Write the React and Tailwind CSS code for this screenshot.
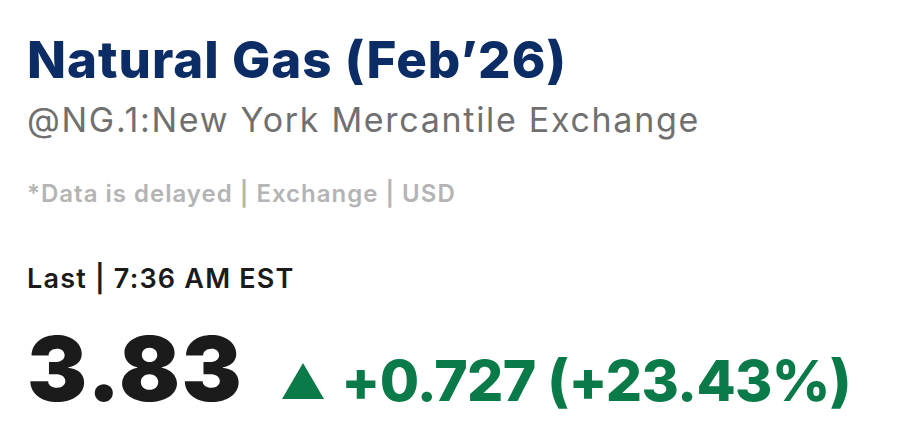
export default function App() {
  return (
    <div className="w-[904px] h-[426px] bg-white overflow-hidden pl-[27px] pt-[30px] font-['Inter','Liberation_Sans',sans-serif]">
      {/* Header */}
      <h1 className="text-[51px] leading-[60px] font-extrabold tracking-[1px] text-[#0b2c65]">
        Natural Gas (Feb’26)
      </h1>
      <div className="text-[34px] leading-[44px] text-[#707070] tracking-[1.7px] mt-[8px]">
        @NG.1:New York Mercantile Exchange
      </div>
      <div className="text-[24px] leading-[30px] font-semibold text-[#b4b4b4] tracking-[1px] mt-[37px]">
        *Data is delayed | Exchange | USD
      </div>

      {/* Quote */}
      <div className="text-[27px] leading-[32px] font-semibold text-[#1b1b1b] tracking-[1.2px] mt-[54px]">
        Last | 7:36 AM EST
      </div>
      <div className="flex items-baseline mt-[29px]">
        <span className="text-[90px] leading-[90px] font-black tracking-[1.5px] text-[#1b1b1b]">3.83</span>
        <span className="flex items-baseline gap-[17px] ml-[39px] text-[57px] leading-[70px] font-extrabold tracking-[-0.7px] text-[#0a7a48]">
          <svg width="42" height="36" viewBox="0 0 42 36" className="self-center">
            <path d="M21 0 L42 36 L0 36 Z" fill="#0a7a48" />
          </svg>
          <span>+0.727 (+23.43%)</span>
        </span>
      </div>
    </div>
  );
}
